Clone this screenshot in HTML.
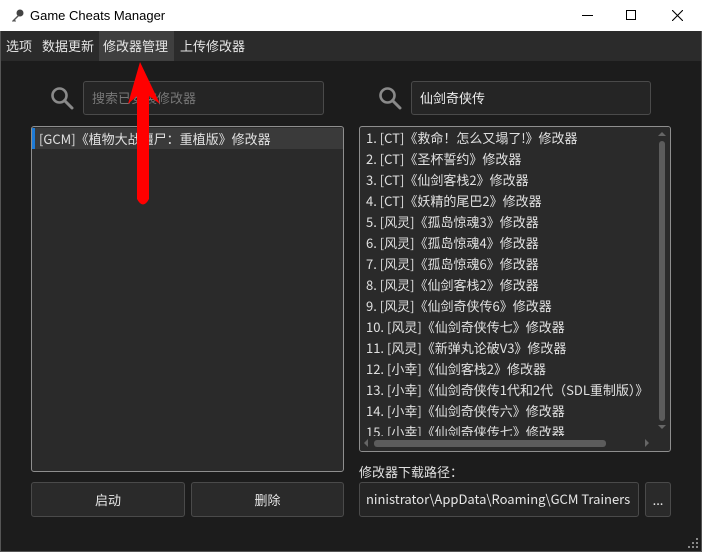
<!DOCTYPE html>
<html><head><meta charset="utf-8"><style>
*{box-sizing:border-box;margin:0;padding:0}
body{width:702px;height:552px;overflow:hidden;background:#1c1c1c;font-family:"Noto Sans CJK SC","Liberation Sans",sans-serif;font-size:13px;color:#ddd;position:relative}
.title{position:absolute;left:0;top:0;width:702px;height:31px;background:#fff;color:#000;font-size:13px;font-family:"Liberation Sans",sans-serif}
.title .t{position:absolute;left:30px;top:8px}
.menu{position:absolute;left:0;top:31px;width:702px;height:30px;background:#2b2b2b}
.menu span{position:absolute;top:0;height:30px;line-height:30px;color:#e6e6e6;font-size:13px;padding:0 3px}
.inp{position:absolute;background:#252525;border:1px solid #4a4a4a;border-radius:3px;height:34px;line-height:32px;padding-left:8px;font-size:13px}
.list{position:absolute;background:#2a2a2a;border:1px solid #8e8e8e;border-radius:3px;overflow:hidden}
.row{height:21px;line-height:21px;padding-left:6px;white-space:nowrap;color:#e0e0e0;font-size:13px}
.btn{position:absolute;background:#2a2a2a;border:1px solid #4a4a4a;border-radius:3px;height:35px;line-height:33px;text-align:center;color:#e6e6e6}
.win{position:absolute;left:0;top:31px;width:702px;height:521px;border-left:1px solid #555;border-right:1px solid #555;border-bottom:1px solid #555;pointer-events:none}
</style></head><body>
<div class="title">
<svg style="position:absolute;left:9px;top:8px" width="16" height="16" viewBox="0 0 16 16"><circle cx="11" cy="5" r="3.5" fill="#444"/><path d="M9 7 L3 13 L4 14 L5 13 L6 14 L7 13 L6 12 L10 8Z" fill="#555"/></svg>
<span class="t">Game Cheats Manager</span>
<div style="position:absolute;left:582px;top:15px;width:11px;height:1px;background:#000"></div>
<div style="position:absolute;left:626px;top:10px;width:10px;height:10px;border:1px solid #000"></div>
<svg style="position:absolute;left:672px;top:10px" width="11" height="11"><path d="M0 0L11 11M11 0L0 11" stroke="#000" stroke-width="1.1"/></svg>
</div>
<div class="menu">
<span style="left:3px">选项</span>
<span style="left:39px">数据更新</span>
<span style="left:99px;background:#3f3f3f;padding:0 4px;width:75px">修改器管理</span>
<span style="left:177px">上传修改器</span>
</div>
<svg style="position:absolute;left:50px;top:86px" width="24" height="24" viewBox="0 0 24 24"><circle cx="9.5" cy="9.5" r="7" fill="none" stroke="#8a8a8a" stroke-width="2.6"/><path d="M14.5 14.5L22 22" stroke="#8a8a8a" stroke-width="3" stroke-linecap="round"/></svg>
<div class="inp" style="left:83px;top:81px;width:241px;color:#777">搜索已安装修改器</div>
<svg style="position:absolute;left:378px;top:86px" width="24" height="24" viewBox="0 0 24 24"><circle cx="9.5" cy="9.5" r="7" fill="none" stroke="#8a8a8a" stroke-width="2.6"/><path d="M14.5 14.5L22 22" stroke="#8a8a8a" stroke-width="3" stroke-linecap="round"/></svg>
<div class="inp" style="left:411px;top:81px;width:240px;color:#eee">仙剑奇侠传</div>
<div class="list" style="left:31px;top:126px;width:313px;height:346px">
<div class="row" style="background:#3a3a3a;border-left:3px solid #1e7bd6;padding-left:4px;margin-top:1px">[GCM]《植物大战僵尸：重植版》修改器</div>
</div>
<div class="btn" style="left:31px;top:482px;width:154px">启动</div>
<div class="btn" style="left:191px;top:482px;width:153px">删除</div>
<div class="list" style="left:359px;top:126px;width:312px;height:326px">
<div>
<div class="row">1. [CT]《救命！怎么又塌了!》修改器</div>
<div class="row">2. [CT]《圣杯誓约》修改器</div>
<div class="row">3. [CT]《仙剑客栈2》修改器</div>
<div class="row">4. [CT]《妖精的尾巴2》修改器</div>
<div class="row">5. [风灵]《孤岛惊魂3》修改器</div>
<div class="row">6. [风灵]《孤岛惊魂4》修改器</div>
<div class="row">7. [风灵]《孤岛惊魂6》修改器</div>
<div class="row">8. [风灵]《仙剑客栈2》修改器</div>
<div class="row">9. [风灵]《仙剑奇侠传6》修改器</div>
<div class="row">10. [风灵]《仙剑奇侠传七》修改器</div>
<div class="row">11. [风灵]《新弹丸论破V3》修改器</div>
<div class="row">12. [小幸]《仙剑客栈2》修改器</div>
<div class="row">13. [小幸]《仙剑奇侠传1代和2代（SDL重制版）》</div>
<div class="row">14. [小幸]《仙剑奇侠传六》修改器</div>
<div class="row">15. [小幸]《仙剑奇侠传七》修改器</div>
</div>
<div style="position:absolute;right:0;top:0;width:15px;height:310px;background:#2a2a2a"></div>
<div style="position:absolute;right:5px;top:14px;width:6px;height:280px;background:#5c5c5c;border-radius:3px"></div>
<div style="position:absolute;right:4px;top:5px;width:0;height:0;border-left:4px solid transparent;border-right:4px solid transparent;border-bottom:4px solid #666"></div>
<div style="position:absolute;right:4px;top:298px;width:0;height:0;border-left:4px solid transparent;border-right:4px solid transparent;border-top:4px solid #666"></div>
<div style="position:absolute;left:0;bottom:0;width:297px;height:15px;background:#2a2a2a"></div>
<div style="position:absolute;left:14px;bottom:4px;width:232px;height:7px;background:#5c5c5c;border-radius:3px"></div>
<div style="position:absolute;left:4px;bottom:4px;width:0;height:0;border-top:4px solid transparent;border-bottom:4px solid transparent;border-right:4px solid #666"></div>
<div style="position:absolute;left:285px;bottom:4px;width:0;height:0;border-top:4px solid transparent;border-bottom:4px solid transparent;border-left:4px solid #666"></div>
</div>
<div style="position:absolute;left:359px;top:462px;color:#e0e0e0">修改器下载路径：</div>
<div class="inp" style="left:359px;top:482px;width:280px;height:35px;padding-left:6px;color:#e6e6e6;font-size:13px;white-space:nowrap;overflow:hidden">ninistrator\AppData\Roaming\GCM Trainers</div>
<div class="btn" style="left:645px;top:482px;width:26px">...</div>
<svg style="position:absolute;left:688px;top:538px" width="12" height="12"><g fill="#888"><rect x="8" y="0" width="2" height="2"/><rect x="4" y="4" width="2" height="2"/><rect x="8" y="4" width="2" height="2"/><rect x="0" y="8" width="2" height="2"/><rect x="4" y="8" width="2" height="2"/><rect x="8" y="8" width="2" height="2"/></g></svg>
<div class="win"></div>
<svg style="position:absolute;left:0;top:0" width="200" height="220"><path d="M140 62 L160 104 L149 96 L149 199 Q143 210 137 199 L137 96 L128 104 Z" fill="#f00"/></svg>
</body></html>
